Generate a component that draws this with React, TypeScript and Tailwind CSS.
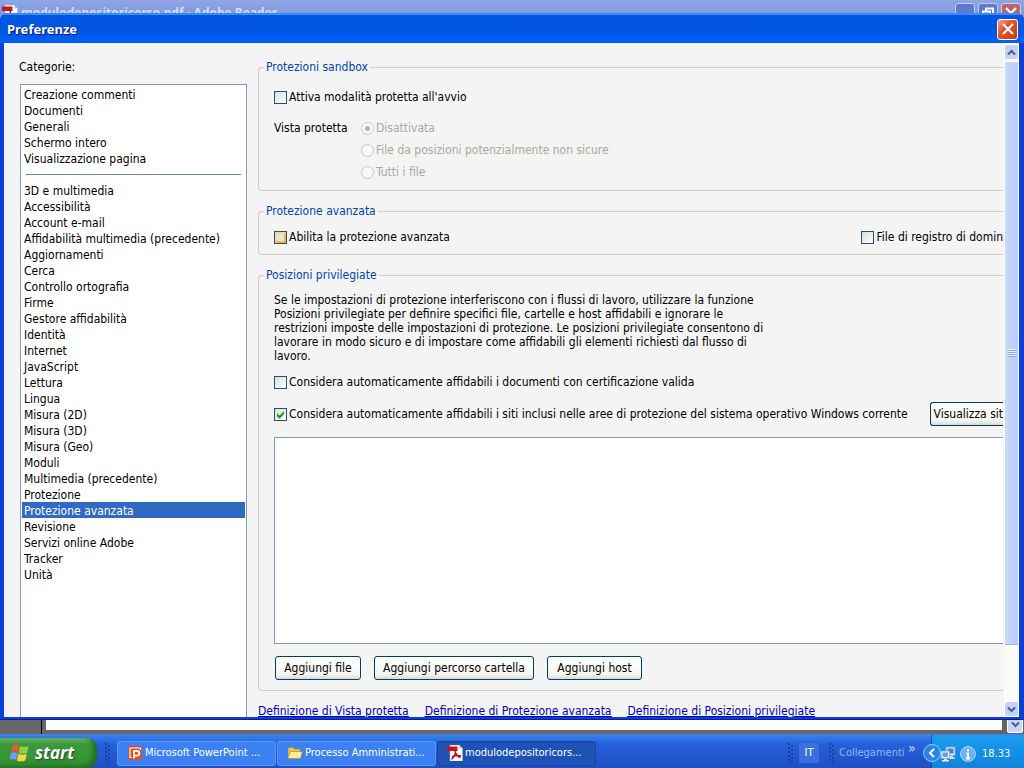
import {useState} from "react";

const topCategories = [
    'Creazione commenti', 'Documenti', 'Generali', 'Schermo intero', 'Visualizzazione pagina',
];

const categories = [
    '3D e multimedia', 'Accessibilità', 'Account e-mail', 'Affidabilità multimedia (precedente)',
    'Aggiornamenti', 'Cerca', 'Controllo ortografia', 'Firme', 'Gestore affidabilità', 'Identità',
    'Internet', 'JavaScript', 'Lettura', 'Lingua', 'Misura (2D)', 'Misura (3D)', 'Misura (Geo)',
    'Moduli', 'Multimedia (precedente)', 'Protezione', 'Protezione avanzata', 'Revisione',
    'Servizi online Adobe', 'Tracker', 'Unità',
];

const views = ['Disattivata', 'File da posizioni potenzialmente non sicure', 'Tutti i file'];

const fieldset = "border border-r-0 border-[#d0d0bf] rounded-l pl-[15px]";
const legend = "-ml-[10px] px-[2px] h-[14px] leading-[14px] text-[#0046b5]";
const checkbox = "appearance-none shrink-0 size-[13px] border border-[#1c5180] bg-linear-to-br from-[#dcdcd7] to-white";
const xpButton = "h-6 border border-[#003c74] rounded-[3px] bg-linear-to-b from-white from-20% via-[#f5f4ee] via-80% to-[#dcd9cc] whitespace-nowrap";

function AcrobatIcon() {
    return (
        <svg viewBox="0 0 16 16" className="size-4 shrink-0">
            <path d="M3 0h9l3.500 3.500V16H3z" fill="#fff"/>
            <path d="M3 0h9l3.500 3.500V16H3z" fill="none" stroke="#b8b8b8" strokeWidth=".6"/>
            <path d="M12 0v3.500h3.500z" fill="#ccc"/>
            <path d="M0 1.500h10.500v4.500H0z" fill="#c8151b"/>
            <path d="M8 6c.8 3.500 2.500 5.500 5.500 6.500M8.500 6c0 3.500-1.500 6.500-4 8M5 12c2.500-1.500 5-1.800 9-1" fill="none" stroke="#b5121b" strokeWidth="1.500"/>
        </svg>
    )
}

function ChevronIcon({up}: { up?: boolean }) {
    return (
        <svg viewBox="0 0 9 7" className="w-[9px] h-[7px]">
            <path d={up ? "M1 5.500 4.500 2 8 5.500" : "M1 1.500 4.500 5 8 1.500"} fill="none" stroke="#4d6185" strokeWidth="2.200"/>
        </svg>
    )
}

function Grip() {
    return (
        <svg viewBox="0 0 6 22" className="w-[6px] h-[22px] shrink-0">
            {[1, 5, 9, 13, 17].map(y => (
                <g key={y} fill="#1941a5">
                    <rect x="0" y={y} width="2" height="2"/>
                    <rect x="3" y={y + 2} width="2" height="2"/>
                </g>
            ))}
        </svg>
    )
}

function Reader() {
    return (
        <div className="h-full flex flex-col bg-[#666]">
            <header className="h-[26px] pl-[2px] pr-[3px] flex items-center bg-linear-to-b from-[#8ea6e4] to-[#7690dc]">
                <AcrobatIcon/>
                <h1 className="ml-[3px] font-bold text-[12px] text-[#d3ddf6] font-['Noto_Sans'] whitespace-nowrap">modulodepositoricorso.pdf - Adobe Reader</h1>
                <div className="ml-auto flex gap-[3px]">
                    <button aria-label="Riduci a icona" className="size-5 border border-[#c0cdf0] rounded-[3px] bg-[#5f78d6]"/>
                    <button aria-label="Ripristina" className="size-5 border border-[#c0cdf0] rounded-[3px] bg-[#5f78d6] flex items-center justify-center">
                        <svg viewBox="0 0 12 12" className="size-3">
                            <path d="M4 4V1.500h7V8H9M1 4.500h7V11H1z" fill="none" stroke="#fff" strokeWidth="2"/>
                        </svg>
                    </button>
                    <button aria-label="Chiudi Reader" className="size-5 border border-[#d8cde0] rounded-[3px] bg-[#b8666e] flex items-center justify-center">
                        <svg viewBox="0 0 12 12" className="size-3">
                            <path d="m1 1 10 10M11 1 1 11" stroke="#fff" strokeWidth="2.200"/>
                        </svg>
                    </button>
                </div>
            </header>
            <div className="flex-1 flex">
                <div className="w-[41px]"/>
                <div className="w-[1px] bg-black mr-1"/>
                <div className="flex-1 bg-white mb-1"/>
                <div className="w-[22px] flex items-end justify-end pb-[1px] pr-[1px]">
                    <div className="w-4 h-[17px] border border-white rounded-[2px] bg-[#c8d6fb] flex items-center justify-center">
                        <ChevronIcon/>
                    </div>
                </div>
            </div>
        </div>
    )
}

function ScrollBar() {
    const arrow = "h-4 border border-white rounded-[3px] bg-[#c4d3fc] flex items-center justify-center shrink-0";
    return (
        <div className="w-[15px] shrink-0 flex flex-col bg-[#fafaf6] pt-[1px]">
            <button aria-label="Scorri su" className={arrow}><ChevronIcon up/></button>
            <div className="flex-1 flex flex-col pb-14">
                <div className="flex-1 mt-[1px] border border-white border-b-[#9db2e8] rounded-[2px] bg-linear-to-r from-[#cad8fd] to-[#b9cbf9] flex flex-col items-center justify-center">
                    {[0, 1, 2, 3].map(i => (
                        <div key={i} className="w-[7px] h-[2px] bg-[#8ca6e0] border-t border-[#eef4fe]"/>
                    ))}
                </div>
            </div>
            <button aria-label="Scorri giù" className={arrow}><ChevronIcon/></button>
        </div>
    )
}

function Category({name, active, onSelect}: { name: string, active: boolean, onSelect: (name: string) => void }) {
    return (
        <li>
            <button onClick={() => onSelect(name)}
                    className={`block w-full h-4 pl-[2px] leading-[18px] text-left whitespace-nowrap ${active ? "bg-[#316ac5] text-white" : ""}`}>{name}
            </button>
        </li>
    )
}

function Preferences() {
    const [active, setActive] = useState('Protezione avanzata');
    const [sandbox, setSandbox] = useState(false);
    const [enhanced, setEnhanced] = useState(false);
    const [log, setLog] = useState(false);
    const [certified, setCertified] = useState(false);
    const [sites, setSites] = useState(true);

    return (
        <section className="absolute inset-x-0 top-[13px] bottom-[14px] flex flex-col rounded-t-lg overflow-hidden bg-[#0a3fdc] border-b border-[#001ea0]">
            <header className="h-[30px] shrink-0 pl-[7px] pr-[6px] flex items-center justify-between bg-linear-to-b from-[#0058e6] via-[#0054e0] via-50% to-[#0061fb] border-t-2 border-[#3a8af5]">
                <h2 className="text-[13px] leading-4 font-bold font-['Noto_Sans'] text-white [text-shadow:1px_1px_1px_#0f1089]">Preferenze</h2>
                <button aria-label="Chiudi" className="size-[21px] border border-white rounded-[3px] bg-linear-to-br from-[#f0a088] via-[#e2542e] via-40% to-[#c63c14] flex items-center justify-center">
                    <svg viewBox="0 0 12 12" className="size-3">
                        <path d="m1 1 10 10M11 1 1 11" stroke="#fff" strokeWidth="2"/>
                    </svg>
                </button>
            </header>
            <div className="flex-1 min-h-0 ml-1 mr-[5px] mb-[2px] flex bg-[#f4f4f4] overflow-hidden">
                <nav className="w-[227px] ml-4 shrink-0 flex flex-col">
                    <h3 className="pt-4 h-[41px] leading-4 -ml-[1px]">Categorie:</h3>
                    <div className="flex-1 min-h-0 overflow-hidden bg-white border border-b-0 border-[#7f9db9] px-[1px] pt-[1px]">
                        <ul>
                            {topCategories.map(name => <Category key={name} name={name} active={name === active} onSelect={setActive}/>)}
                        </ul>
                        <hr className="mt-2 mb-[7px] mx-1 border-[#6a8caf]"/>
                        <ul>
                            {categories.map(name => <Category key={name} name={name} active={name === active} onSelect={setActive}/>)}
                        </ul>
                    </div>
                </nav>

                <div className="flex-1 min-w-0 ml-[11px] pt-[17px] mr-[1px] overflow-hidden whitespace-nowrap">
                    <fieldset className={`${fieldset} pt-[15px] pb-[7px]`}>
                        <legend className={legend}>Protezioni sandbox</legend>
                        <label className="flex items-center gap-[2px] h-4">
                            <input type="checkbox" checked={sandbox} onChange={() => setSandbox(!sandbox)} className={checkbox}/>
                            Attiva modalità protetta all'avvio
                        </label>
                        <div className="mt-3 flex">
                            <p className="w-[87px] h-[22px] leading-[22px]">Vista protetta</p>
                            <div>
                                {views.map((view, i) => (
                                    <label key={view} className="flex items-center gap-[2px] h-[22px] text-[#aca899]">
                                        <input type="radio" name="vista" disabled defaultChecked={i === 0}
                                               className="appearance-none size-[13px] rounded-full border border-[#cac8bb] bg-[#f8f8f6] checked:bg-[radial-gradient(#b5b3a8_0_2px,#f8f8f6_3px)]"/>
                                        {view}
                                    </label>
                                ))}
                            </div>
                        </div>
                    </fieldset>

                    <fieldset className={`${fieldset} mt-[13px] pt-[11px] pb-[9px] min-w-0`}>
                        <legend className={legend}>Protezione avanzata</legend>
                        <div className="flex h-4">
                            <label className="flex items-center gap-[2px]">
                                <input type="checkbox" checked={enhanced} onChange={() => setEnhanced(!enhanced)}
                                       className="appearance-none shrink-0 size-[13px] border border-[#1c5180] bg-[#e8e4dc] shadow-[inset_1px_1px_0_#fbd890,inset_-2px_-2px_0_#f8b636,inset_2px_2px_0_#fcd88c]"/>
                                Abilita la protezione avanzata
                            </label>
                            <label className="ml-auto flex items-center gap-[2px]">
                                <input type="checkbox" checked={log} onChange={() => setLog(!log)} className={checkbox}/>
                                File di registro di domin
                            </label>
                        </div>
                    </fieldset>

                    <fieldset className={`${fieldset} mt-[13px] pt-[11px] pb-[10px] min-w-0`}>
                        <legend className={legend}>Posizioni privilegiate</legend>
                        <p className="max-w-[494px] leading-[14px] whitespace-normal">
                            Se le impostazioni di protezione interferiscono con i flussi di lavoro, utilizzare la funzione
                            Posizioni privilegiate per definire specifici file, cartelle e host affidabili e ignorare le
                            restrizioni imposte delle impostazioni di protezione. Le posizioni privilegiate consentono di
                            lavorare in modo sicuro e di impostare come affidabili gli elementi richiesti dal flusso di lavoro.
                        </p>
                        <label className="mt-[11px] flex items-center gap-[2px] h-4">
                            <input type="checkbox" checked={certified} onChange={() => setCertified(!certified)} className={checkbox}/>
                            Considera automaticamente affidabili i documenti con certificazione valida
                        </label>
                        <div className="mt-3 flex">
                            <label className="flex items-center gap-[2px]">
                                <span className="relative flex">
                                    <input type="checkbox" checked={sites} onChange={() => setSites(!sites)} className={checkbox}/>
                                    {sites && (
                                        <svg viewBox="0 0 13 13" className="absolute inset-0 size-[13px] pointer-events-none">
                                            <path d="M3 5v3.200L5.500 10.700 10 6.200V3L5.500 7.500z" fill="#21a121"/>
                                        </svg>
                                    )}
                                </span>
                                Considera automaticamente affidabili i siti inclusi nelle aree di protezione del sistema operativo Windows corrente
                            </label>
                            <button className={`${xpButton} ml-auto w-[73px] shrink-0 border-r-0 rounded-r-none text-right`}>Visualizza sit</button>
                        </div>
                        <div className="mt-[11px] h-[207px] bg-white border border-r-0 border-[#7f9db9]"/>
                        <div className="mt-3 ml-[1px] flex gap-[13px]">
                            <button className={`${xpButton} w-[86px]`}>Aggiungi file</button>
                            <button className={`${xpButton} w-40`}>Aggiungi percorso cartella</button>
                            <button className={`${xpButton} w-[95px]`}>Aggiungi host</button>
                        </div>
                    </fieldset>

                    <div className="mt-3 flex gap-4 text-[#0000cc] underline">
                        <a href="#vista">Definizione di Vista protetta</a>
                        <a href="#avanzata">Definizione di Protezione avanzata</a>
                        <a href="#posizioni">Definizione di Posizioni privilegiate</a>
                    </div>
                </div>
                <ScrollBar/>
            </div>
        </section>
    )
}

function Taskbar() {
    const task = "w-[159px] h-[25px] rounded-[3px] flex items-center pl-[9px] gap-[2px] border";
    return (
        <footer className="h-[34px] shrink-0 flex items-end text-[11px] text-white bg-linear-to-b from-[#3c86ee] via-[#2560dc] via-30% to-[#1f4fc4] whitespace-nowrap">
            <button className="w-[97px] h-[30px] pl-[10px] flex items-center gap-[5px] rounded-r-[10px] bg-linear-to-b from-[#6cb86c] via-[#3c9a3c] via-20% to-[#338f33] shadow-[inset_-4px_-2px_5px_#1f6b1f]">
                <svg viewBox="0 0 20 20" className="size-5">
                    <path d="M3 2.500C5 1 7 1.300 9.300 2.500L7.800 9.200C5.500 8 3.500 7.800 1.300 9.200z" fill="#ee5a2c"/>
                    <path d="M10.200 3C12.500 4.200 15.500 4.300 18.500 3L17 9.800c-3 1.300-6 1-8.400 0z" fill="#8fd04a"/>
                    <path d="M1 10.300c2.200-1.500 4.500-1.200 6.600-.1L6 17c-2.200-1.200-4.500-1.500-6.500 0z" fill="#6a9cff"/>
                    <path d="M8.400 10.800c2.500 1.100 5.500 1.300 8.400 0L15.300 17.500c-3 1.300-6 1-8.500 0z" fill="#fdd23a"/>
                </svg>
                <span className="text-[17px] font-bold italic font-['Open_Sans'] [text-shadow:1px_1px_2px_#1a4a1a]">start</span>
            </button>
            <div className="ml-2 h-[30px] flex items-center"><Grip/></div>
            <div className="ml-[6px] h-[30px] flex items-center gap-[1px]">
                <button className={`${task} bg-[#3c81f3] border-[#5a98f8]`}>
                    <svg viewBox="0 0 16 16" className="size-4 shrink-0">
                        <rect x="1" y="1" width="14" height="14" rx="2" fill="#d9512c"/>
                        <path d="M5 12.500H3V3h10.500v2" fill="none" stroke="#fff" strokeWidth="1.200"/>
                        <path d="M7 13.500V6h3a2.300 2.300 0 0 1 0 4.600H7" fill="none" stroke="#fff" strokeWidth="1.800"/>
                    </svg>
                    Microsoft PowerPoint ...
                </button>
                <button className={`${task} bg-[#3c81f3] border-[#5a98f8]`}>
                    <svg viewBox="0 0 16 16" className="size-4 shrink-0">
                        <path d="M1 3.500 2 2.500h4l1.500 1.500H13v9H1z" fill="#e8c558" stroke="#a98322" strokeWidth=".6"/>
                        <path d="M3.500 6.500H15.500L13.500 13.500H1z" fill="#fdeb95" stroke="#a98322" strokeWidth=".6"/>
                    </svg>
                    Processo Amministrati...
                </button>
                <button className={`${task} bg-[#1e52b7] border-[#1945a0]`}>
                    <AcrobatIcon/>
                    modulodepositoricors...
                </button>
            </div>
            <div className="ml-auto h-[30px] flex items-center">
                <Grip/>
                <button className="ml-[5px] w-5 h-5 bg-[#3b6fdd]">IT</button>
                <div className="ml-[10px]"><Grip/></div>
                <span className="ml-1 w-[69px] text-[#8db8f8]">Collegamenti</span>
                <span className="w-[23px] h-full text-[14px] leading-5 text-[#c8dcfb]">»</span>
            </div>
            <div className="relative h-[33px] w-[93px] pt-1 pl-2 flex items-center bg-linear-to-b from-[#1c9cf0] via-[#1290e8] via-50% to-[#1282dc] border-l border-[#0a56b0]">
                <button aria-label="Mostra icone nascoste" className="absolute -left-[9px] top-[9px] size-[18px] rounded-full border border-[#8fd0fa] bg-[#2784ee] flex items-center justify-center">
                    <svg viewBox="0 0 8 10" className="w-2 h-[10px]">
                        <path d="M6 1 2 5l4 4" fill="none" stroke="#fff" strokeWidth="2"/>
                    </svg>
                </button>
                <svg viewBox="0 0 16 16" className="size-4 shrink-0">
                    <path d="M6 1h9v8.500H6z" fill="#e4eefb" stroke="#7c9cd0" strokeWidth=".8"/>
                    <path d="M7.500 2.500h6v5h-6z" fill="#4a7cd0"/>
                    <path d="M9 10h4v1.500h2V13H9z" fill="#d0e0f4"/>
                    <path d="M1 5h8.500v7.500H1z" fill="#f0f6fe" stroke="#7c9cd0" strokeWidth=".8"/>
                    <path d="M2.500 6.500H8V11H2.500z" fill="#6a9ce8"/>
                    <path d="M4 13h3v1h2v1.500H2V14h2z" fill="#e4eefb"/>
                </svg>
                <svg viewBox="0 0 16 16" className="ml-1 size-4 shrink-0">
                    <circle cx="8" cy="8" r="7.500" fill="#6cb4f4" stroke="#a8d4fa"/>
                    <path d="M8 3v2.500M6.500 7.500H8V12.500M6 12.500h4" fill="none" stroke="#fff" strokeWidth="2"/>
                </svg>
                <time className="ml-[6px]">18.33</time>
            </div>
        </footer>
    )
}

function App() {
    return (
        <div className="h-screen min-h-[400px] flex flex-col text-[12px] leading-4 text-black font-['DejaVu_Sans_Condensed',sans-serif]">
            <main className="relative flex-1 min-h-0 overflow-hidden">
                <Reader/>
                <Preferences/>
            </main>
            <Taskbar/>
        </div>
    )
}

export default App;
